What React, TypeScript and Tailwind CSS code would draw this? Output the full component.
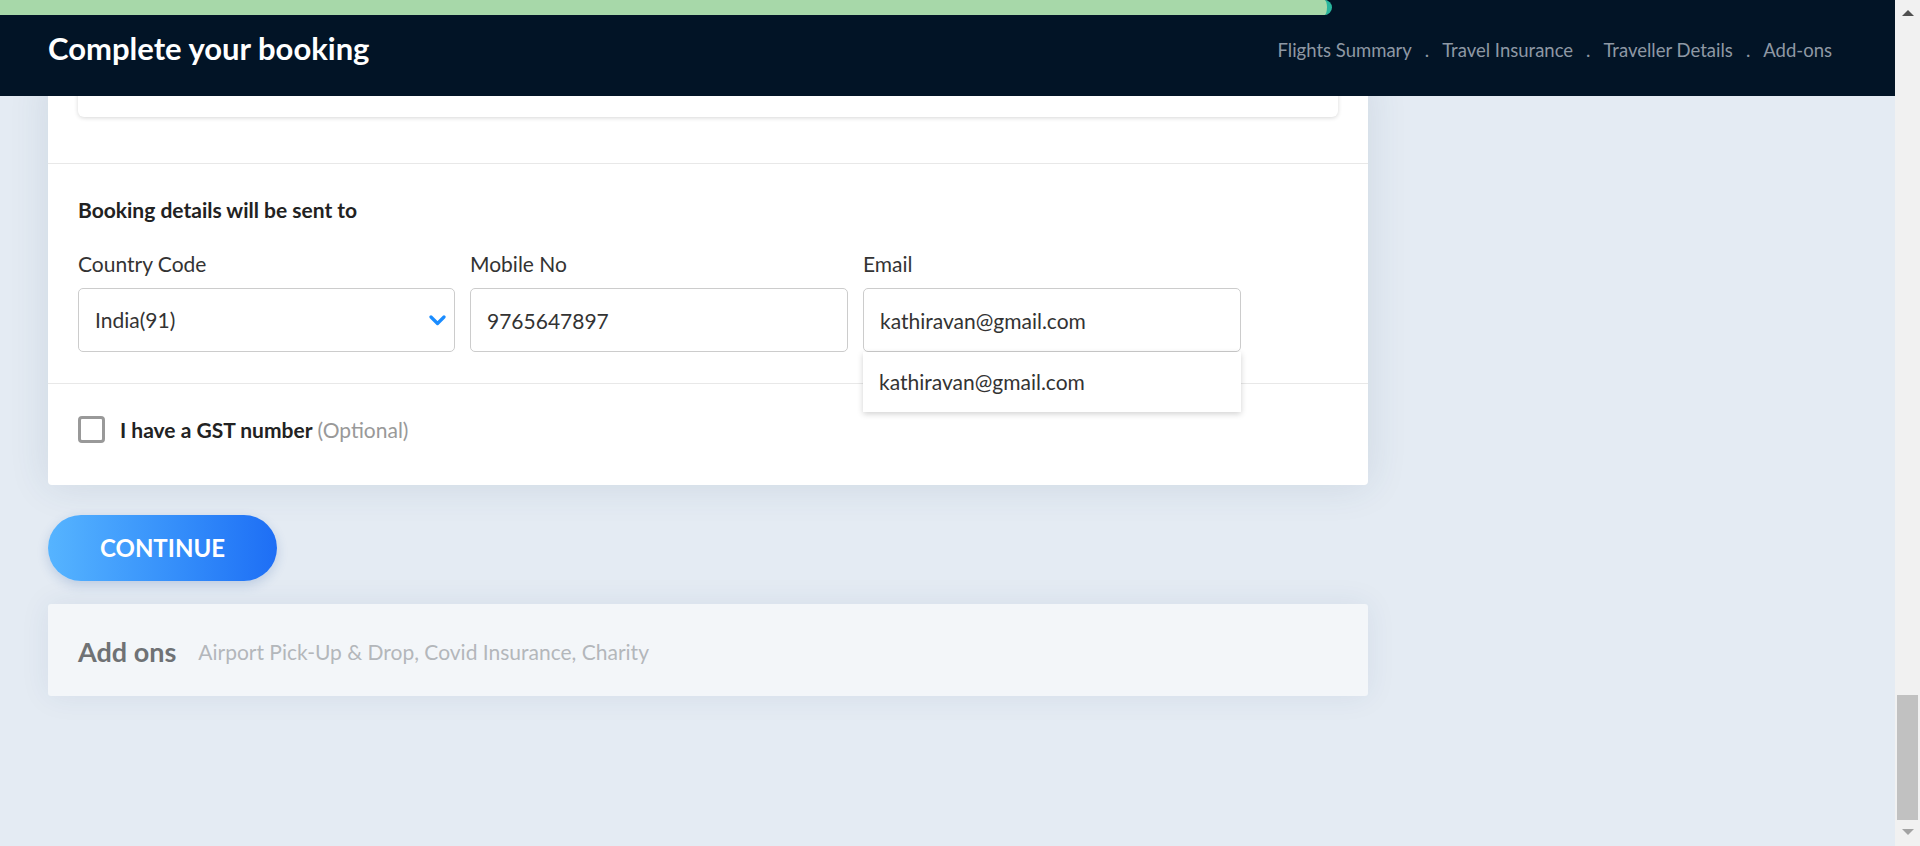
import { useState } from 'react'

const steps = ['Flights Summary', 'Travel Insurance', 'Traveller Details', 'Add-ons']

const Field = ({ label, children }: { label: string; children: React.ReactNode }) => (
  <div className="relative flex flex-col">
    <label className="mb-[13px] text-[21px] leading-[22px] text-[#333]">{label}</label>
    {children}
  </div>
)

function Scrollbar() {
  return (
    <div className="flex w-[25px] shrink-0 flex-col items-center bg-[#f1f1f1]">
      <div className="mt-[10px] h-0 w-0 border-x-[6px] border-b-[6px] border-x-transparent border-b-[#505050]" />
      <div className="flex-1" />
      <div className="h-[125px] w-[21px] bg-[#c1c1c1]" />
      <div className="mt-[9px] mb-[11px] h-0 w-0 border-x-[6px] border-t-[6px] border-x-transparent border-t-[#a3a3a3]" />
    </div>
  )
}

export default function App() {
  const [gst, setGst] = useState(false)

  return (
    <div className="flex h-[846px] w-full overflow-hidden bg-[#e4ebf3] font-['Lato',sans-serif]">
      <div className="flex min-w-0 flex-1 flex-col">
        {/* Header */}
        <header className="relative z-10 flex h-[96px] shrink-0 items-center justify-between bg-[#021426] pl-[48px] pr-[63px]">
          <div className="absolute left-0 top-0 h-[15px] w-[1332px] rounded-l-[4px] rounded-r-full border-r-[5px] border-[#2ab59d] bg-[#a7d8a9]" />
          <h1 className="text-[31px] font-bold leading-none text-white">Complete your booking</h1>
          <nav className="flex items-center pt-[5px] text-[18.5px] text-[#8e98a4]">
            {steps.map((s, i) => (
              <span key={s} className="flex items-center">
                {i > 0 && <span className="mx-[13px]">.</span>}
                {s}
              </span>
            ))}
          </nav>
        </header>

        <main className="pl-[48px]">
          {/* Booking card */}
          <div className="-mt-[20px] w-[1320px] rounded-b-[4px] bg-white shadow-[0_0_40px_rgba(40,70,110,0.12)]">
            <div className="border-b border-[#e8e8e8] px-[30px] pb-[46px]">
              <div className="h-[41px] rounded-b-[6px] bg-white shadow-[0_1px_4px_rgba(0,0,0,0.16)]" />
            </div>

            <div className="border-b border-[#e8e8e8] px-[30px] pt-[35px] pb-[31px]">
              <h2 className="text-[21px] font-bold leading-[22px] text-[#222]">Booking details will be sent to</h2>
              <div className="mt-[32px] grid grid-cols-[377px_378px_378px] gap-x-[15px]">
                <Field label="Country Code">
                  <div className="flex h-[64px] items-center justify-between rounded-[5px] border border-[#cccccc] pl-[16px] pr-[8px] text-[21px] text-[#333]">
                    <span>India(91)</span>
                    <svg width="17" height="11" viewBox="0 0 17 11" fill="none">
                      <path d="M2 2l6.5 6.5L15 2" stroke="#1a8cff" strokeWidth="3.2" strokeLinecap="round" strokeLinejoin="round" />
                    </svg>
                  </div>
                </Field>
                <Field label="Mobile No">
                  <input
                    defaultValue="9765647897"
                    className="h-[64px] rounded-[5px] border border-[#cccccc] px-[16px] text-[21px] text-[#333] outline-none"
                  />
                </Field>
                <Field label="Email">
                  <input
                    defaultValue="kathiravan@gmail.com"
                    className="h-[64px] rounded-[5px] border border-[#cccccc] px-[16px] text-[21px] text-[#333] outline-none"
                  />
                  {/* autocomplete suggestion */}
                  <div className="absolute left-0 right-0 top-[99px] z-20 flex h-[60px] items-center bg-white pl-[16px] text-[21px] text-[#333] shadow-[0_2px_6px_rgba(0,0,0,0.18)]">
                    kathiravan@gmail.com
                  </div>
                </Field>
              </div>
            </div>

            <div className="px-[30px] pt-[32px] pb-[42px]">
              <label className="flex cursor-pointer items-center text-[21px] leading-[27px]">
                <span
                  onClick={() => setGst(!gst)}
                  className="mr-[15px] h-[27px] w-[27px] rounded-[4px] border-[3px] border-[#999]"
                />
                <span className="font-bold text-[#222]">I have a GST number</span>
                <span className="ml-[5px] text-[#999]">(Optional)</span>
              </label>
            </div>
          </div>

          <button className="mt-[30px] h-[66px] w-[229px] rounded-full bg-gradient-to-r from-[#56b4ff] to-[#1e6ef5] text-[24px] font-bold text-white shadow-[0_4px_12px_rgba(30,80,160,0.2)]">
            CONTINUE
          </button>

          {/* Add ons */}
          <div className="mt-[23px] flex h-[92px] w-[1320px] items-center rounded-[3px] bg-[#f3f6f9] px-[30px] pt-[4px] shadow-[0_0_30px_rgba(40,70,110,0.08)]">
            <span className="text-[27px] font-bold text-[#6f7275]">Add ons</span>
            <span className="ml-[22px] text-[21px] text-[#b3b7bb]">Airport Pick-Up &amp; Drop, Covid Insurance, Charity</span>
          </div>
        </main>
      </div>
      <Scrollbar />
    </div>
  )
}
